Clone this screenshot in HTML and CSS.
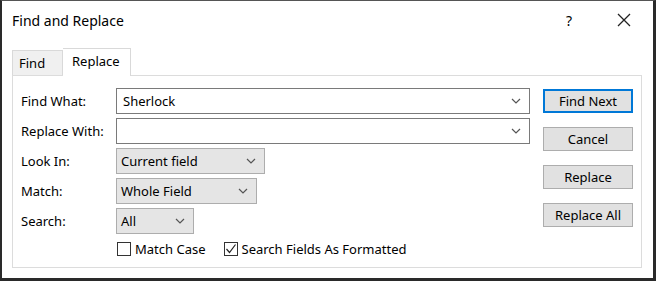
FILE: index.html
```html
<!DOCTYPE html>
<html lang="en">
<head>
    <meta charset="UTF-8">
    <meta name="viewport" content="width=device-width, initial-scale=1.0">
    <title>Find and Replace</title>
    <link rel="stylesheet" href="styles.css">
</head>
<body>
    <div class="dialog">
        <div class="titlebar">
            <span class="title">Find and Replace</span>
            <span class="help">?</span>
            <svg class="close" width="14" height="14" viewBox="0 0 14 14">
                <path d="M1 1 L13 13 M13 1 L1 13" stroke="#222" stroke-width="1.3" fill="none"/>
            </svg>
        </div>

        <div class="tabs">
            <div class="tab">Find</div>
            <div class="tab active">Replace</div>
        </div>

        <div class="panel">
            <div class="form">
                <div class="row">
                    <label class="label">Find What:</label>
                    <div class="combo edit wide">
                        <span>Sherlock</span>
                        <svg class="chev" width="10" height="6" viewBox="0 0 10 6"><path d="M1 1 L5 5 L9 1" stroke="#555" stroke-width="1.2" fill="none"/></svg>
                    </div>
                </div>
                <div class="row">
                    <label class="label">Replace With:</label>
                    <div class="combo edit wide">
                        <span></span>
                        <svg class="chev" width="10" height="6" viewBox="0 0 10 6"><path d="M1 1 L5 5 L9 1" stroke="#555" stroke-width="1.2" fill="none"/></svg>
                    </div>
                </div>
                <div class="row">
                    <label class="label">Look In:</label>
                    <div class="combo drop look">
                        <span>Current field</span>
                        <svg class="chev" width="10" height="6" viewBox="0 0 10 6"><path d="M1 1 L5 5 L9 1" stroke="#555" stroke-width="1.2" fill="none"/></svg>
                    </div>
                </div>
                <div class="row">
                    <label class="label">Match:</label>
                    <div class="combo drop match">
                        <span>Whole Field</span>
                        <svg class="chev" width="10" height="6" viewBox="0 0 10 6"><path d="M1 1 L5 5 L9 1" stroke="#555" stroke-width="1.2" fill="none"/></svg>
                    </div>
                </div>
                <div class="row">
                    <label class="label">Search:</label>
                    <div class="combo drop search">
                        <span>All</span>
                        <svg class="chev" width="10" height="6" viewBox="0 0 10 6"><path d="M1 1 L5 5 L9 1" stroke="#555" stroke-width="1.2" fill="none"/></svg>
                    </div>
                </div>
                <div class="checks">
                    <div class="check">
                        <span class="box"></span>
                        <span>Match Case</span>
                    </div>
                    <div class="check">
                        <span class="box">
                            <svg width="14" height="14" viewBox="0 0 14 14"><path d="M2.5 7 L5.5 10.5 L11.5 2.5" stroke="#222" stroke-width="1.2" fill="none"/></svg>
                        </span>
                        <span>Search Fields As Formatted</span>
                    </div>
                </div>
            </div>

            <div class="buttons">
                <button class="btn default">Find Next</button>
                <button class="btn">Cancel</button>
                <button class="btn">Replace</button>
                <button class="btn">Replace All</button>
            </div>
        </div>
    </div>
</body>
</html>
```

FILE: styles.css
```css
body {
    margin: 0;
    padding: 0;
    background-color: #fff;
    font-family: "Noto Sans", "Open Sans", sans-serif;
    font-size: 13px;
    color: #000;
}

.dialog {
    width: 656px;
    height: 281px;
    box-sizing: border-box;
    border-top: 1px solid #555;
    border-left: 2px solid #2a2a2a;
    border-right: 3px solid #2a2a2a;
    border-bottom: 3px solid #2a2a2a;
    background-color: #fff;
    padding: 0 10px 0 10px;
}

.titlebar {
    display: flex;
    align-items: center;
    height: 38px;
}

.title {
    font-size: 14px;
    flex: 1;
}

.help {
    font-size: 14px;
    margin-right: 45px;
}

.close {
    margin-right: 12px;
}

.tabs {
    display: flex;
    align-items: flex-end;
    height: 36px;
    position: relative;
    z-index: 1;
}

.tab {
    box-sizing: border-box;
    width: 51px;
    height: 25px;
    padding: 3px 0 0 6px;
    background-color: #f0f0f0;
    border: 1px solid #d9d9d9;
    border-bottom: none;
    font-size: 13px;
}

.tab.active {
    width: 68px;
    height: 28px;
    padding: 3px 0 0 9px;
    background-color: #fff;
    border-left: none;
    margin-bottom: -1px;
}

.panel {
    display: flex;
    height: 193px;
    width: 630px;
    box-sizing: border-box;
    border: 1px solid #dcdcdc;
    padding: 12px 8px 0 8px;
}

.form {
    display: flex;
    flex-direction: column;
    gap: 4px;
}

.row {
    display: flex;
    align-items: center;
    height: 26px;
}

.label {
    width: 95px;
    flex: none;
}

.combo {
    display: flex;
    align-items: center;
    justify-content: space-between;
    box-sizing: border-box;
    height: 26px;
    border: 1px solid #7a7a7a;
}

.combo.edit {
    background-color: #fff;
    padding: 0 8px 0 6px;
}

.combo.drop {
    background-color: #e5e5e5;
    border-color: #adadad;
    padding: 0 8px 0 4px;
}

.wide {
    width: 414px;
}

.look {
    width: 149px;
}

.match {
    width: 141px;
}

.search {
    width: 78px;
}

.checks {
    display: flex;
    align-items: center;
    gap: 18px;
    margin-left: 96px;
    margin-top: 2px;
}

.check {
    display: flex;
    align-items: center;
    gap: 4px;
}

.box {
    display: inline-flex;
    width: 14px;
    height: 14px;
    box-sizing: border-box;
    border: 1px solid #333;
    background-color: #fff;
    align-items: center;
    justify-content: center;
}

.box svg {
    flex: none;
}

.buttons {
    display: flex;
    flex-direction: column;
    gap: 14px;
    margin-left: 13px;
    padding-top: 1px;
}

.btn {
    width: 90px;
    height: 24px;
    box-sizing: border-box;
    background-color: #e1e1e1;
    border: 1px solid #adadad;
    font-family: "Noto Sans", "Open Sans", sans-serif;
    font-size: 13px;
    color: #000;
    padding: 0;
}

.btn.default {
    border: 2px solid #0078d7;
}
```
